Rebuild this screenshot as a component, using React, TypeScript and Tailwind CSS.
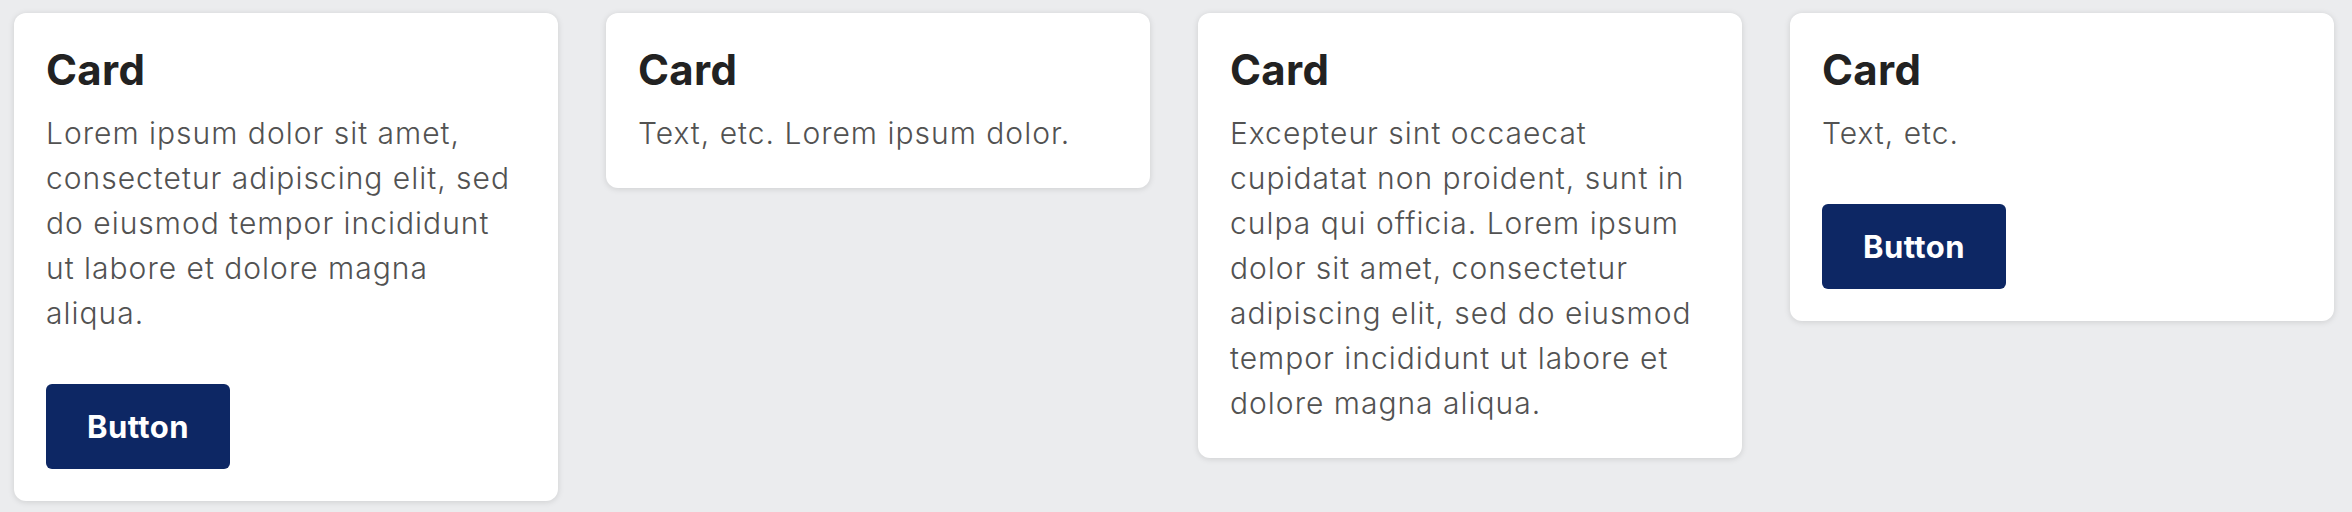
const cards = [
  {
    text: "Lorem ipsum dolor sit amet, consectetur adipiscing elit, sed do eiusmod tempor incididunt ut labore et dolore magna aliqua.",
    button: true,
  },
  { text: "Text, etc. Lorem ipsum dolor.", button: false },
  {
    text: "Excepteur sint occaecat cupidatat non proident, sunt in culpa qui officia. Lorem ipsum dolor sit amet, consectetur adipiscing elit, sed do eiusmod tempor incididunt ut labore et dolore magna aliqua.",
    button: false,
  },
  { text: "Text, etc.", button: true },
];

const Card = ({ text, button }: { text: string; button: boolean }) => (
  <div className="w-[544px] shrink-0 bg-white rounded-[12px] shadow-[0_1px_6px_rgba(0,0,0,0.13)] pl-[32px] pr-[34px] pt-[32px] pb-[32px]">
    <h2 className="text-[42px] leading-[1.2] font-bold tracking-[0.3px] text-[#222222] mb-[16px]">Card</h2>
    <p className="text-[30px] leading-[45px] font-[350] tracking-[1px] text-[#525252]">{text}</p>
    {button && (
      <button className="mt-[48px] w-[184px] h-[85px] rounded-[6px] bg-[#0d2764] text-white text-[31px] font-bold tracking-[0.4px]">
        Button
      </button>
    )}
  </div>
);

export default function App() {
  return (
    <div className="w-[2352px] h-[512px] bg-[#ebecee] pl-[14px] pt-[13px] font-['Inter',sans-serif]">
      <div className="flex items-start gap-[48px]">
        {cards.map((c, i) => (
          <Card key={i} text={c.text} button={c.button} />
        ))}
      </div>
    </div>
  );
}
